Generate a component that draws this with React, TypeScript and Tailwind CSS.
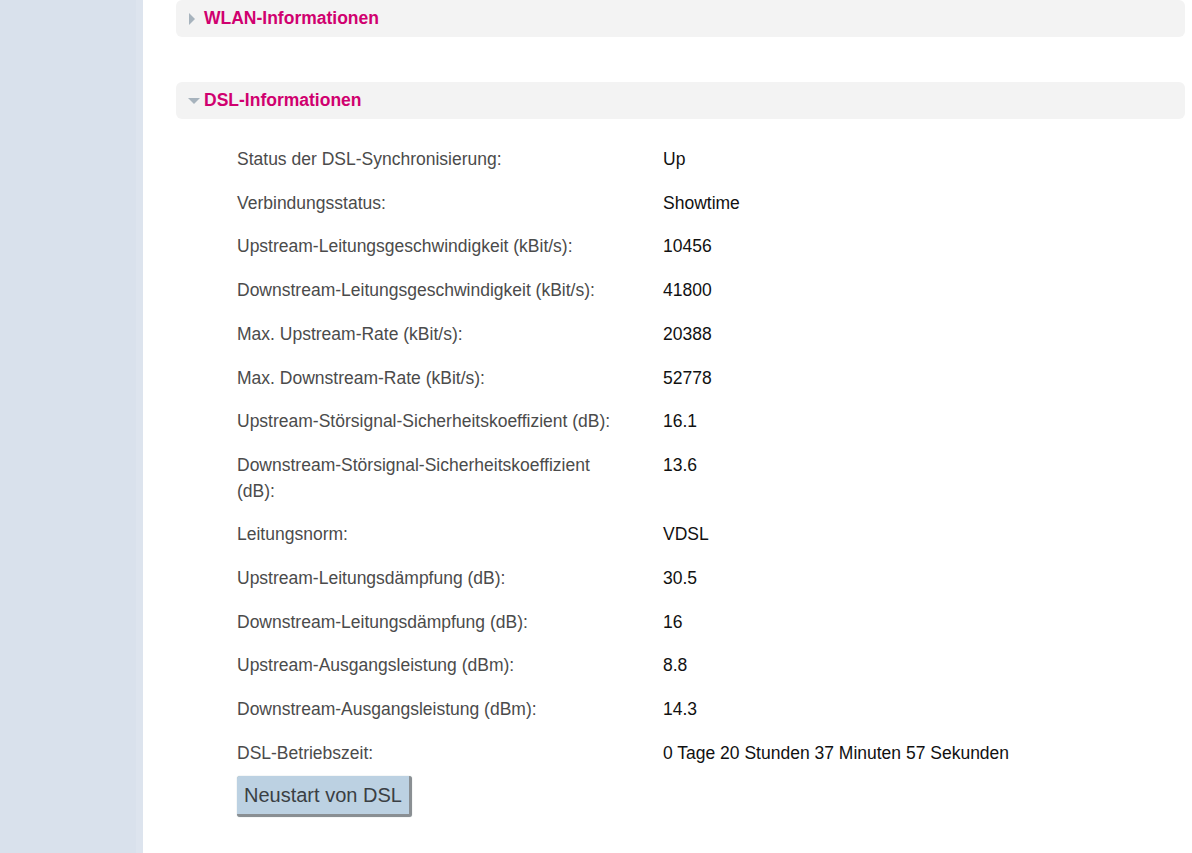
import React from 'react'

interface InfoRow {
  label: string
  value: string
}

const rows: InfoRow[] = [
  { label: 'Status der DSL-Synchronisierung:', value: 'Up' },
  { label: 'Verbindungsstatus:', value: 'Showtime' },
  { label: 'Upstream-Leitungsgeschwindigkeit (kBit/s):', value: '10456' },
  { label: 'Downstream-Leitungsgeschwindigkeit (kBit/s):', value: '41800' },
  { label: 'Max. Upstream-Rate (kBit/s):', value: '20388' },
  { label: 'Max. Downstream-Rate (kBit/s):', value: '52778' },
  { label: 'Upstream-Störsignal-Sicherheitskoeffizient (dB):', value: '16.1' },
  { label: 'Downstream-Störsignal-Sicherheitskoeffizient (dB):', value: '13.6' },
  { label: 'Leitungsnorm:', value: 'VDSL' },
  { label: 'Upstream-Leitungsdämpfung (dB):', value: '30.5' },
  { label: 'Downstream-Leitungsdämpfung (dB):', value: '16' },
  { label: 'Upstream-Ausgangsleistung (dBm):', value: '8.8' },
  { label: 'Downstream-Ausgangsleistung (dBm):', value: '14.3' },
  { label: 'DSL-Betriebszeit:', value: '0 Tage 20 Stunden 37 Minuten 57 Sekunden' },
]

const SectionHeader: React.FC<{ title: string; open: boolean }> = ({ title, open }) => (
  <div className="flex items-center h-[37px] bg-[#f3f3f3] rounded-[6px] pl-[12px]">
    <span className="w-[16px] flex items-center">
      {open ? (
        <svg width="12" height="8" viewBox="0 0 12 8">
          <path d="M0 1 L12 1 L6 7 Z" fill="#a7b3bd" />
        </svg>
      ) : (
        <svg width="8" height="12" viewBox="0 0 8 12">
          <path d="M1 0 L7 6 L1 12 Z" fill="#a7b3bd" />
        </svg>
      )}
    </span>
    <span className="text-[17.5px] font-bold text-[#d0006f]">{title}</span>
  </div>
)

export default function App() {
  return (
    <div className="flex min-h-[853px] bg-white" style={{ fontFamily: '"Liberation Sans", Arial, sans-serif' }}>
      <div className="w-[143px] shrink-0 bg-[#d9e1ec] border-r-[7px] border-[#dde4ee]" />
      <div className="flex-1 pl-[33px] pr-[7px]">
        <SectionHeader title="WLAN-Informationen" open={false} />
        <div className="h-[45px]" />
        <SectionHeader title="DSL-Informationen" open={true} />

        <div className="pl-[61px] pt-[19px]">
          {rows.map((row) => (
            <div key={row.label} className="flex text-[17.5px] leading-[25.7px] py-[9px]">
              <div className="w-[385px] text-[#4b4b4b]">{row.label}</div>
              <div className="pl-[41px] text-[#111]">{row.value}</div>
            </div>
          ))}
          <button className="h-[41px] px-[7px] bg-[#bcd1e2] text-[#3a3f44] text-[20px] rounded-[3px] border-r-[3px] border-b-[3px] border-[#8a8f93] shadow-[0_0_1px_#9aa]">
            Neustart von DSL
          </button>
        </div>
      </div>
    </div>
  )
}
